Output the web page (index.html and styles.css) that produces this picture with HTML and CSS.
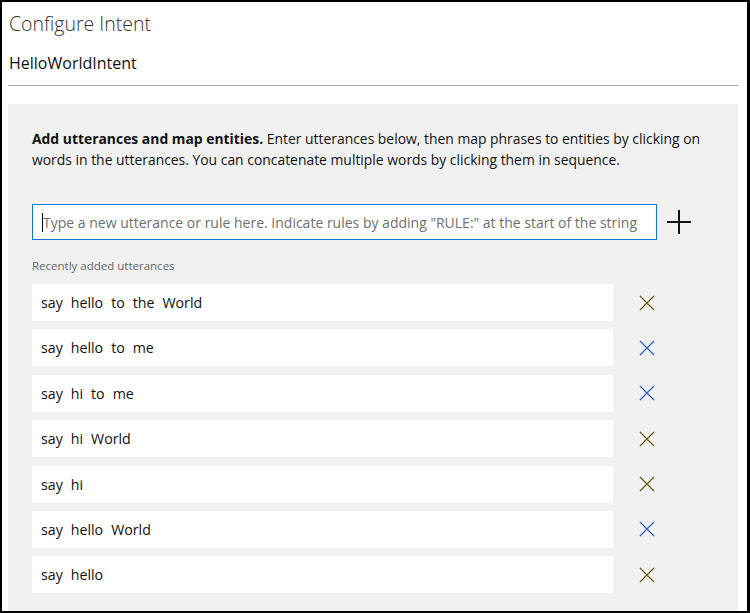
FILE: index.html
```html
<!DOCTYPE html>
<html>
<head>
<meta charset="utf-8">
<link rel="stylesheet" href="styles.css">
</head>
<body>
<div class="window">
  <h1 class="title">Configure Intent</h1>
  <h2 class="intent">HelloWorldIntent</h2>
  <div class="divider"></div>
  <section class="panel">
    <p class="intro"><b>Add utterances and map entities.</b> Enter utterances below, then map phrases to entities by clicking on words in the utterances. You can concatenate multiple words by clicking them in sequence.</p>
    <div class="entry">
      <div class="input"><span class="caret"></span><span class="placeholder">Type a new utterance or rule here. Indicate rules by adding "RULE:" at the start of the string</span></div>
      <span class="add"><svg width="26" height="26" viewBox="0 0 26 26"><path d="M13 1V25M1 13H25" stroke="#111" stroke-width="2" fill="none"/></svg></span>
    </div>
    <div class="recent-label">Recently added utterances</div>
    <ul class="list">
      <li class="row"><div class="utt"><span>say</span><span>hello</span><span>to</span><span>the</span><span>World</span></div><span class="del olive"><svg width="16" height="16" viewBox="0 0 16 16"><path d="M1 1L15 15M15 1L1 15" stroke="currentColor" stroke-width="1.3"/></svg></span></li>
      <li class="row"><div class="utt"><span>say</span><span>hello</span><span>to</span><span>me</span></div><span class="del blue"><svg width="16" height="16" viewBox="0 0 16 16"><path d="M1 1L15 15M15 1L1 15" stroke="currentColor" stroke-width="1.3"/></svg></span></li>
      <li class="row"><div class="utt"><span>say</span><span>hi</span><span>to</span><span>me</span></div><span class="del blue"><svg width="16" height="16" viewBox="0 0 16 16"><path d="M1 1L15 15M15 1L1 15" stroke="currentColor" stroke-width="1.3"/></svg></span></li>
      <li class="row"><div class="utt"><span>say</span><span>hi</span><span>World</span></div><span class="del olive"><svg width="16" height="16" viewBox="0 0 16 16"><path d="M1 1L15 15M15 1L1 15" stroke="currentColor" stroke-width="1.3"/></svg></span></li>
      <li class="row"><div class="utt"><span>say</span><span>hi</span></div><span class="del olive"><svg width="16" height="16" viewBox="0 0 16 16"><path d="M1 1L15 15M15 1L1 15" stroke="currentColor" stroke-width="1.3"/></svg></span></li>
      <li class="row"><div class="utt"><span>say</span><span>hello</span><span>World</span></div><span class="del blue"><svg width="16" height="16" viewBox="0 0 16 16"><path d="M1 1L15 15M15 1L1 15" stroke="currentColor" stroke-width="1.3"/></svg></span></li>
      <li class="row"><div class="utt"><span>say</span><span>hello</span></div><span class="del olive"><svg width="16" height="16" viewBox="0 0 16 16"><path d="M1 1L15 15M15 1L1 15" stroke="currentColor" stroke-width="1.3"/></svg></span></li>
    </ul>
  </section>
</div>
</body>
</html>
```

FILE: styles.css
```css
html, body {
  margin: 0;
  padding: 0;
  height: 100%;
  background: #fff;
}
body {
  font-family: "Segoe UI", "Open Sans", "Noto Sans", sans-serif;
  color: #111;
  overflow: hidden;
}
.window {
  box-sizing: border-box;
  height: 613px;
  width: 750px;
  border: 2px solid #000;
  border-right-width: 3px;
  padding: 0 9px 0 6px;
  display: flex;
  flex-direction: column;
  overflow: hidden;
}
.title {
  margin: 9px 0 0 1px;
  font-size: 19.5px;
  font-weight: 300;
  line-height: 26px;
  color: #333;
}
.intent {
  margin: 15px 0 0 1px;
  font-size: 16px;
  font-weight: 400;
  line-height: 22px;
  color: #111;
}
.divider {
  margin-top: 11px;
  height: 1px;
  background: #a8a8a8;
}
.panel {
  margin-top: 18px;
  background: #f1f1f1;
  padding: 24px 24px 8px 24px;
  flex: 1;
}
.intro {
  margin: 0;
  font-size: 13.9px;
  line-height: 21px;
  color: #111;
  width: 690px;
}
.intro b {
  font-weight: 700;
}
.entry {
  margin-top: 34px;
  display: flex;
  align-items: center;
}
.input {
  box-sizing: border-box;
  width: 625px;
  height: 36px;
  background: #fff;
  border: 1px solid #0a78d4;
  display: flex;
  align-items: center;
  padding-left: 9px;
  white-space: nowrap;
  overflow: hidden;
}
.caret {
  width: 1px;
  height: 19px;
  background: #000;
}
.placeholder {
  font-size: 14px;
  color: #707070;
}
.add {
  display: flex;
  margin-left: 9px;
}
.recent-label {
  margin-top: 18px;
  font-size: 11.5px;
  color: #666;
  line-height: 16px;
}
.list {
  list-style: none;
  margin: 10px 0 0 0;
  padding: 0;
  display: flex;
  flex-direction: column;
  gap: 8.4px;
}
.row {
  display: flex;
  align-items: center;
}
.utt {
  box-sizing: border-box;
  width: 581px;
  height: 37px;
  background: #fff;
  display: flex;
  align-items: center;
  padding-left: 9px;
  font-size: 14.2px;
  color: #111;
}
.utt span {
  margin-right: 8px;
}
.del {
  display: flex;
  margin-left: 26px;
}
.olive { color: #6e5a14; }
.blue { color: #2f63c0; }
```
